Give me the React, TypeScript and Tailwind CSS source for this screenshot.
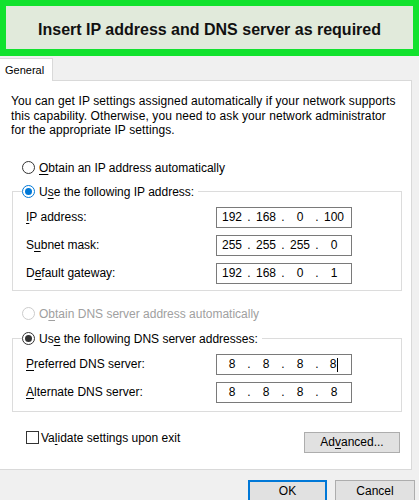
import type { ReactNode } from 'react'

type RadioState = 'off' | 'blue' | 'dark' | 'disabled'

function Radio({ state }: { state: RadioState }) {
  const ring: Record<RadioState, string> = {
    off: 'border-[#333333]',
    blue: 'border-[#0078d7]',
    dark: 'border-[#333333]',
    disabled: 'border-[#cccccc]',
  }
  return (
    <span className={`w-[13px] h-[13px] rounded-full border bg-white flex items-center justify-center shrink-0 ${ring[state]}`}>
      {state === 'blue' && <span className="w-[7px] h-[7px] rounded-full bg-[#0078d7]" />}
      {state === 'dark' && <span className="w-[7px] h-[7px] rounded-full bg-[#333333]" />}
    </span>
  )
}

function U({ children }: { children: ReactNode }) {
  return <span className="underline underline-offset-[2px] decoration-[1px]">{children}</span>
}

function IpBox({ parts, cursor }: { parts: string[]; cursor?: boolean }) {
  return (
    <div className="w-[136px] h-[21px] border border-[#7a7a7a] bg-white flex items-center">
      {parts.map((p, i) => (
        <div key={i} className="flex items-center">
          <span className="w-[30px] text-center">
            {p}
            {cursor && i === 3 && <span className="inline-block w-px h-[14px] bg-black align-middle ml-px" />}
          </span>
          {i < 3 && <span className="w-[4px] text-center">.</span>}
        </div>
      ))}
    </div>
  )
}

function Row({ label, parts, cursor }: { label: ReactNode; parts: string[]; cursor?: boolean }) {
  return (
    <div className="flex items-center h-[21px]">
      <span className="w-[190px]">{label}</span>
      <IpBox parts={parts} cursor={cursor} />
    </div>
  )
}

export default function App() {
  return (
    <div className="w-[419px] h-[500px] overflow-hidden bg-[#f0f0f0] text-[12px] text-black" style={{ fontFamily: '"Liberation Sans", Arial, sans-serif' }}>
      {/* Banner */}
      <div className="h-[56px] border-[6px] border-b-[7px] border-[#12e22e] bg-[#e1eadb] flex items-center justify-center pt-[4px]">
        <span className="text-[16px] font-bold text-[#111111]">Insert IP address and DNS server as required</span>
      </div>

      {/* Tabs */}
      <div className="flex mt-[2px]">
        <div className="w-[53px] h-[23px] bg-white border-t border-r border-[#d9d9d9] pl-[5px] pt-[3px] text-[11px]">General</div>
        <div className="w-[359px] h-[23px] border-b border-[#d9d9d9]" />
      </div>

      {/* Panel */}
      <div className="w-[412px] bg-white border-r border-b border-[#d9d9d9] pt-[13px] pb-[16px]">
        <p className="pl-[11px] leading-[14.5px] whitespace-nowrap tracking-[0.1px]">
          You can get IP settings assigned automatically if your network supports
          <br />
          this capability. Otherwise, you need to ask your network administrator
          <br />
          for the appropriate IP settings.
        </p>

        <div className="flex items-center gap-[4px] pl-[22px] mt-[22px] h-[16px]">
          <Radio state="off" />
          <span>
            <U>O</U>btain an IP address automatically
          </span>
        </div>

        <fieldset className="ml-[12px] mr-[9px] mt-[8px] border border-[#dcdcdc] pb-[6px]">
          <legend className="ml-[9px] pr-[4px]">
            <span className="flex items-center gap-[4px] h-[16px]">
              <Radio state="blue" />
              <span>
                U<U>s</U>e the following IP address:
              </span>
            </span>
          </legend>
          <div className="flex flex-col gap-[7px] mt-[7px] pl-[13px]">
            <Row label={<><U>I</U>P address:</>} parts={['192', '168', '0', '100']} />
            <Row label={<>S<U>u</U>bnet mask:</>} parts={['255', '255', '255', '0']} />
            <Row label={<>D<U>e</U>fault gateway:</>} parts={['192', '168', '0', '1']} />
          </div>
        </fieldset>

        <div className="flex items-center gap-[4px] pl-[22px] mt-[15px] h-[16px] text-[#a0a0a0]">
          <Radio state="disabled" />
          <span>
            O<U>b</U>tain DNS server address automatically
          </span>
        </div>

        <fieldset className="ml-[12px] mr-[9px] mt-[9px] border border-[#dcdcdc] pb-[8px]">
          <legend className="ml-[9px] pr-[4px]">
            <span className="flex items-center gap-[4px] h-[16px]">
              <Radio state="dark" />
              <span>
                Us<U>e</U> the following DNS server addresses:
              </span>
            </span>
          </legend>
          <div className="flex flex-col gap-[7px] mt-[7px] pl-[13px]">
            <Row label={<><U>P</U>referred DNS server:</>} parts={['8', '8', '8', '8']} cursor />
            <Row label={<><U>A</U>lternate DNS server:</>} parts={['8', '8', '8', '8']} />
          </div>
        </fieldset>

        <div className="flex justify-between items-start pl-[26px] pr-[11px] mt-[19px]">
          <div className="flex items-center gap-[2px] h-[14px]">
            <span className="w-[13px] h-[13px] border border-[#333333] bg-white" />
            <span>
              Va<U>l</U>idate settings upon exit
            </span>
          </div>
          <button className="w-[96px] h-[21px] mt-[1px] bg-[#e1e1e1] border border-[#adadad]">
            Ad<U>v</U>anced...
          </button>
        </div>
      </div>

      {/* Dialog buttons */}
      <div className="flex justify-end gap-[8px] pr-[4px] mt-[10px]">
        <button className="w-[79px] h-[23px] bg-[#e1e1e1] border-2 border-[#0078d7]">OK</button>
        <button className="w-[80px] h-[23px] bg-[#e1e1e1] border border-[#adadad]">Cancel</button>
      </div>
    </div>
  )
}
